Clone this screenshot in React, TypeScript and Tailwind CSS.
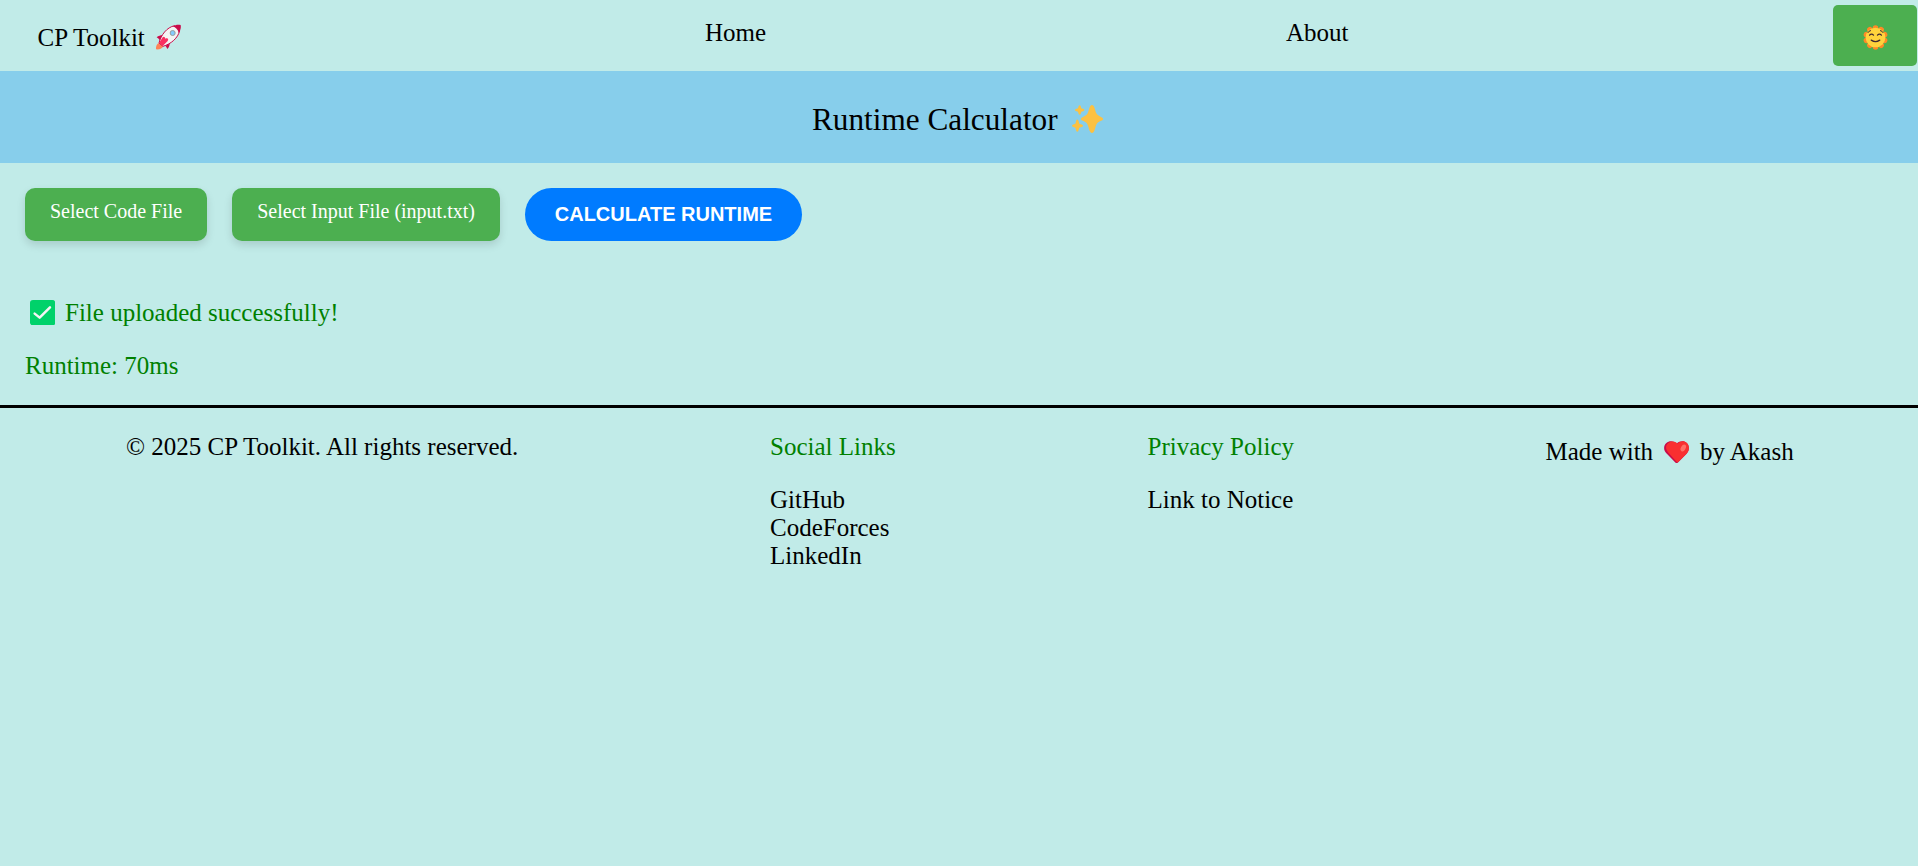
import type { ReactNode } from "react";

function Rocket() {
  return (
    <svg viewBox="0 0 81 78" className="mt-[24px] ml-[10.5px] h-[26px] w-[27px]">
      <path d="M3 76C2 66 6 58 14 56L25 65C23 73 14 77 3 76Z" fill="#ff8257" />
      <path d="M5 40C12 34 20 33 27 34L17 56C15 48 11 43 5 40Z" fill="#ca0b4a" />
      <path d="M37 75C34 67 29 63 22 60L45 50C45 60 43 69 37 75Z" fill="#ca0b4a" />
      <path d="M12 57C18 33 35 10 59 5L74 20C69 42 48 60 24 67Z" fill="#f4f4f4" stroke="#ca0b4a" strokeWidth="3" />
      <path d="M53 7C61 2 70 1 77 3C79 10 76 20 71 27C69 17 62 10 53 7Z" fill="#ca0b4a" />
      <path d="M12 57L23 40C26 36 30 38 31 44C38 41 42 45 38 51L23 66Z" fill="#f92f60" />
      <circle cx="53" cy="27" r="7.5" fill="#83cbff" stroke="#9b9b9b" strokeWidth="3" />
    </svg>
  );
}

const rays = [0, 36, 72, 108, 144, 180, 216, 252, 288, 324];

function Sun() {
  return (
    <svg viewBox="0 0 76 76" className="h-[25px] w-[25px]">
      {rays.map((angle) => (
        <circle key={angle} cx="38" cy="9" r="8.5" fill="#ff8a26" transform={`rotate(${angle} 38 38)`} />
      ))}
      <circle cx="38" cy="38" r="30" fill="#ffd33c" />
      <g fill="none" stroke="#402a32" strokeLinecap="round" strokeWidth="3.8">
        <path d="M20 31Q26 24 32 31M44 31Q50 24 56 31M25 46Q38 55 51 46" />
        <path d="M15 23Q17 18 23 17M53 17Q59 18 61 23" strokeWidth="3" />
      </g>
    </svg>
  );
}

function Sparkles() {
  return (
    <svg viewBox="0 0 94 84" className="mt-[34px] ml-[14.5px] h-[28px] w-[31.3px]" fill="#fcc142">
      <path d="M55 3Q60 -3 65 3C69 10 70 19 73 25C77 31 84 35 91 38Q96 42 91 46C83 49 76 52 73 59C70 66 69 75 65 81Q60 87 55 81C51 75 50 66 47 59C44 52 37 49 29 46Q24 42 29 38C36 35 44 31 47 25C50 19 51 10 55 3Z" />
      <path d="M20 3Q23 -2 26 3L28 10L35 12Q39 15 35 18L28 20L26 27Q23 31 20 27L18 20L11 18Q7 15 11 12L18 10Z" />
      <path d="M13 46Q16 41 19 46L22 56L31 59Q35 62 31 65L22 68L19 78Q16 82 13 78L10 68L2 65Q-2 62 2 59L10 56Z" />
    </svg>
  );
}

function Check() {
  return (
    <svg viewBox="0 0 76 76" className="mt-[0.5px] ml-[4.7px] h-[25.3px] w-[25.3px]">
      <rect x="0" y="0" width="76" height="76" rx="9" fill="#00d26a" />
      <path d="M14 41L29 53L60 22" fill="none" stroke="#f4f4f4" strokeWidth="7.5" strokeLinecap="round" strokeLinejoin="round" />
    </svg>
  );
}

function Heart() {
  return (
    <svg viewBox="0 0 76 68" className="mt-[3px] h-[22.6px] w-[25.3px]">
      <path d="M38 8C46 0 60 -2 68 6C77 14 77 28 68 38L42 65Q38 68 34 65L7 37C-2 27 -2 14 7 6C16 -2 30 0 38 8Z" fill="#ca0b4a" />
      <path d="M41 8C49 0 61 -2 69 6C77 14 77 27 69 37L43 63Q40 66 37 62L13 35C4 26 4 14 12 7C20 -1 33 0 41 8Z" fill="#f92f30" />
      <ellipse cx="58" cy="21" rx="7" ry="11" transform="rotate(30 58 21)" fill="#ff6f66" />
    </svg>
  );
}

function FileButton({ children }: { children: ReactNode }) {
  return (
    <label className="h-[53px] rounded-[10px] bg-[#4caf50] px-[25px] pt-[12px] text-[20px] leading-[23px] text-white shadow-[0_4px_8px_rgba(0,0,0,0.13)]">
      {children}
    </label>
  );
}

export default function App() {
  return (
    <div className="min-h-screen bg-[#c1ebe8] font-['Liberation_Serif',serif] text-[25px] leading-[28px] whitespace-nowrap text-black">
      <header className="flex h-[71px] items-start pl-[37.5px]">
        <div className="flex w-[667.5px] shrink-0 items-start">
          <span className="mt-[24px]">CP Toolkit</span>
          <Rocket />
        </div>
        <a className="mt-[19px] w-[581px] shrink-0">Home</a>
        <a className="mt-[19px] grow">About</a>
        <button className="mt-[5px] mr-px flex h-[61px] w-[84px] items-center justify-center rounded-[5px] bg-[#4caf50] pt-[4px]">
          <Sun />
        </button>
      </header>
      <section className="flex h-[92px] items-start bg-[#87ceeb] pl-[812px] text-[31.25px] leading-[36px]">
        <h1 className="mt-[31px]">Runtime Calculator</h1>
        <Sparkles />
      </section>
      <main className="h-[242px] px-[25px] pt-[25px]">
        <div className="flex gap-[25px]">
          <FileButton>Select Code File</FileButton>
          <FileButton>Select Input File (input.txt)</FileButton>
          <button className="h-[53px] w-[277px] rounded-full bg-[#007bff] pb-px font-['Liberation_Sans',sans-serif] text-[20px] font-bold text-white">
            CALCULATE RUNTIME
          </button>
        </div>
        <p className="mt-[58px] flex h-[28px] items-start text-[#008000]">
          <Check />
          <span className="ml-[10px]">File uploaded successfully!</span>
        </p>
        <p className="mt-[25px] text-[#008000]">Runtime: 70ms</p>
      </main>
      <footer className="flex items-start border-t-[3px] border-black pt-[25px] pl-[126px]">
        <p className="w-[644px] shrink-0">© 2025 CP Toolkit. All rights reserved.</p>
        <div className="w-[377.5px] shrink-0">
          <h2 className="mb-[25px] text-[#008000]">Social Links</h2>
          <ul>
            <li>GitHub</li>
            <li>CodeForces</li>
            <li>LinkedIn</li>
          </ul>
        </div>
        <div className="w-[398px] shrink-0">
          <h2 className="mb-[25px] text-[#008000]">Privacy Policy</h2>
          <a>Link to Notice</a>
        </div>
        <p className="mt-[5px] flex">
          <span className="mr-[10.5px]">Made with</span>
          <Heart />
          <span className="ml-[11px]">by Akash</span>
        </p>
      </footer>
    </div>
  );
}
